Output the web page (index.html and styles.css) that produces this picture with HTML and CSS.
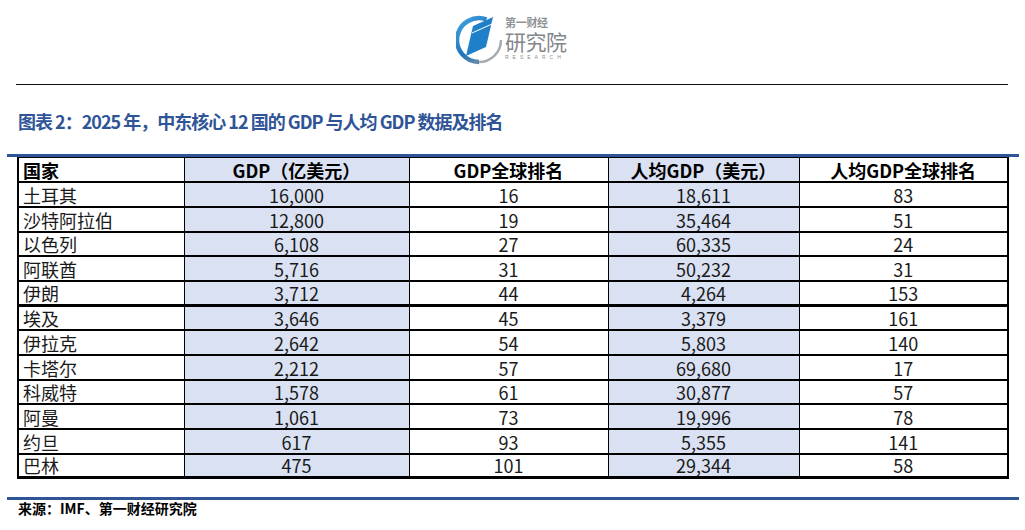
FILE: index.html
```html
<!DOCTYPE html>
<html lang="zh">
<head>
<meta charset="utf-8">
<link rel="stylesheet" href="styles.css">
</head>
<body>
<div class="page">
  <header class="brand">
    <svg class="brand-mark" width="48" height="54" viewBox="0 0 48 54">
      <defs>
        <linearGradient id="ring" x1="0" y1="0" x2="0.6" y2="1">
          <stop offset="0" stop-color="#45a6e2"/>
          <stop offset="0.7" stop-color="#1f74bb"/>
          <stop offset="1" stop-color="#5d87ab"/>
        </linearGradient>
      </defs>
      <path d="M30.5 6.3 A22 22 0 1 0 23 49" fill="none" stroke="url(#ring)" stroke-width="4.5"/>
      <path d="M23 49 A22 22 0 0 0 45 27" fill="none" stroke="#a7acb1" stroke-width="2.5"/>
      <polygon points="17,13 37,4 30,34 10,43" fill="#1f80c9"/>
      <line x1="16" y1="20" x2="36" y2="11" stroke="#ffffff" stroke-width="1"/>
    </svg>
    <div class="brand-text">
      <span class="brand-small">第一财经</span>
      <span class="brand-big">研究院</span>
      <span class="brand-tiny">RESEARCH</span>
    </div>
  </header>
  <div class="top-rule"></div>
  <h1 class="title">图表 2：2025 年，中东核心 12 国的 GDP 与人均 GDP 数据及排名</h1>
  <div class="blue-bar"></div>
  <table class="data">
    <colgroup>
      <col class="c1"><col class="c2"><col class="c3"><col class="c4"><col class="c5">
    </colgroup>
    <thead>
      <tr><th class="left">国家</th><th class="shade">GDP（亿美元）</th><th>GDP全球排名</th><th class="shade">人均GDP（美元）</th><th>人均GDP全球排名</th></tr>
    </thead>
    <tbody>
      <tr><td class="left">土耳其</td><td class="shade">16,000</td><td>16</td><td class="shade">18,611</td><td>83</td></tr>
      <tr><td class="left">沙特阿拉伯</td><td class="shade">12,800</td><td>19</td><td class="shade">35,464</td><td>51</td></tr>
      <tr><td class="left">以色列</td><td class="shade">6,108</td><td>27</td><td class="shade">60,335</td><td>24</td></tr>
      <tr><td class="left">阿联酋</td><td class="shade">5,716</td><td>31</td><td class="shade">50,232</td><td>31</td></tr>
      <tr class="group-end"><td class="left">伊朗</td><td class="shade">3,712</td><td>44</td><td class="shade">4,264</td><td>153</td></tr>
      <tr><td class="left">埃及</td><td class="shade">3,646</td><td>45</td><td class="shade">3,379</td><td>161</td></tr>
      <tr><td class="left">伊拉克</td><td class="shade">2,642</td><td>54</td><td class="shade">5,803</td><td>140</td></tr>
      <tr><td class="left">卡塔尔</td><td class="shade">2,212</td><td>57</td><td class="shade">69,680</td><td>17</td></tr>
      <tr><td class="left">科威特</td><td class="shade">1,578</td><td>61</td><td class="shade">30,877</td><td>57</td></tr>
      <tr><td class="left">阿曼</td><td class="shade">1,061</td><td>73</td><td class="shade">19,996</td><td>78</td></tr>
      <tr><td class="left">约旦</td><td class="shade">617</td><td>93</td><td class="shade">5,355</td><td>141</td></tr>
      <tr><td class="left">巴林</td><td class="shade">475</td><td>101</td><td class="shade">29,344</td><td>58</td></tr>
    </tbody>
  </table>
  <div class="blue-bar foot-bar"></div>
  <p class="source">来源：IMF、第一财经研究院</p>
</div>
</body>
</html>
```

FILE: styles.css
```css
html, body {
  margin: 0;
  padding: 0;
  background: #ffffff;
}

.page {
  width: 1025px;
  height: 530px;
  overflow: hidden;
  font-family: "Noto Sans CJK SC", "Liberation Sans", sans-serif;
  color: #000;
}

.brand {
  height: 84px;
  display: flex;
  justify-content: center;
  align-items: flex-start;
  gap: 1px;
  box-sizing: border-box;
}

.brand-mark {
  margin-top: 13px;
}

.brand-text {
  display: flex;
  flex-direction: column;
  margin-top: 15px;
  color: #8a8d90;
  width: 64px;
}

.brand-small {
  font-size: 11px;
  line-height: 14px;
  font-weight: 700;
  letter-spacing: -0.3px;
  color: #909396;
}

.brand-big {
  font-size: 21px;
  line-height: 24px;
  letter-spacing: -0.5px;
  color: #83878b;
}

.brand-tiny {
  margin-top: 1px;
  font-family: "Liberation Sans", sans-serif;
  font-size: 5px;
  line-height: 6px;
  letter-spacing: 4px;
  color: #8a8d90;
}

.top-rule {
  margin-left: 16px;
  width: 992px;
  height: 1px;
  background: #111;
}

.title {
  margin: 0;
  padding: 24px 0 0 18px;
  height: 45px;
  box-sizing: border-box;
  font-size: 18px;
  line-height: 24px;
  font-weight: 700;
  color: #2f5597;
  letter-spacing: -1px;
  white-space: nowrap;
}

.blue-bar {
  margin: 24px 0 0 7px;
  width: 1012px;
  height: 3px;
  background: #2f5597;
}

.data {
  margin-left: 17px;
  width: 990px;
  border-collapse: collapse;
  table-layout: fixed;
  border-top: 1px solid #000;
  border-left: 2px solid #000;
  border-right: 2px solid #000;
  border-bottom: 3px solid #000;
}

.c1 { width: 166px; }
.c2 { width: 225px; }
.c3 { width: 199px; }
.c4 { width: 191px; }
.c5 { width: 209px; }

.data th,
.data td {
  padding: 0 0 1px 0;
  height: 25px;
  box-sizing: border-box;
  border-bottom: 2px solid #000;
  border-left: 1px solid #000;
  text-align: center;
  vertical-align: bottom;
  font-size: 18px;
  line-height: 20px;
  white-space: nowrap;
}

.data tbody tr:nth-child(3n) td {
  height: 24px;
}

.data th {
  font-weight: 700;
  height: 24.3px;
}

.data td {
  font-weight: 400;
  color: #1a1a1a;
}

.data .left {
  text-align: left;
  padding-left: 4px;
}

.data .shade {
  background: #d9e1f2;
}

.data tr.group-end td {
  border-bottom: 3px solid #000;
}

.foot-bar {
  margin-top: 18px;
}

.source {
  margin: -1px 0 0 18px;
  font-size: 14px;
  line-height: 18px;
  font-weight: 700;
  color: #000;
}
```
